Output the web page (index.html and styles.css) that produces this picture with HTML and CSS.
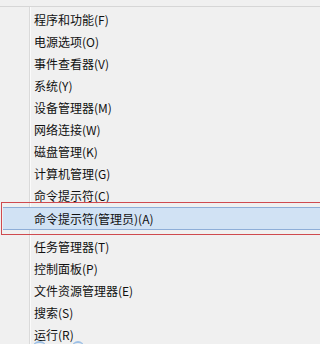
FILE: index.html
```html
<!DOCTYPE html>
<html lang="zh-CN">
<head>
<meta charset="utf-8">
<title>Win+X 菜单</title>
<link rel="stylesheet" href="styles.css">
</head>
<body>
<div class="menu">
  <div class="item">程序和功能(F)</div>
  <div class="item">电源选项(O)</div>
  <div class="item">事件查看器(V)</div>
  <div class="item">系统(Y)</div>
  <div class="item">设备管理器(M)</div>
  <div class="item">网络连接(W)</div>
  <div class="item">磁盘管理(K)</div>
  <div class="item">计算机管理(G)</div>
  <div class="item">命令提示符(C)</div>
  <div class="item hot">命令提示符(管理员)(A)</div>
  <div class="mark"></div>
  <div class="item first">任务管理器(T)</div>
  <div class="item">控制面板(P)</div>
  <div class="item">文件资源管理器(E)</div>
  <div class="item">搜索(S)</div>
  <div class="item">运行(R)</div>
  <div class="peek a"></div>
  <div class="peek b"></div>
</div>
</body>
</html>
```
FILE: styles.css
```css
html, body {
  margin: 0;
  padding: 0;
  background: #f0f0f0;
  overflow: hidden;
}
body {
  height: 344px;
  font-family: "Noto Sans CJK SC", "Noto Sans", sans-serif;
  font-size: 12px;
  color: #111;
}
.menu {
  position: relative;
  margin-top: 6px;
  border-top: 1px solid #d6d6d6;
  padding-top: 2px;
  height: 340px;
  background-image: linear-gradient(to right, transparent 29px, #dadada 29px, #dadada 30px, #fbfbfb 30px, #fbfbfb 31px, transparent 31px);
}
.item {
  height: 22px;
  line-height: 22px;
  padding-left: 34px;
  white-space: nowrap;
}
.item.hot {
  box-sizing: border-box;
  height: 23px;
  line-height: 21px;
  margin-left: 3px;
  padding-left: 31px;
  background: #d1e2f4;
  border-top: 1px solid #8eaed8;
  border-bottom: 1px solid #8eaed8;
}
.item.first {
  margin-top: 6px;
}
.mark {
  position: absolute;
  left: 1px;
  right: -2px;
  top: 195px;
  height: 31px;
  border: 1px solid #cf4a4f;
}
.peek {
  position: absolute;
  top: 334px;
  height: 4px;
  border-radius: 6px 6px 0 0;
  border-top: 2px solid #9dc0e6;
}
.peek.a { left: 33px; width: 13px; }
.peek.b { left: 72px; width: 12px; }
```
